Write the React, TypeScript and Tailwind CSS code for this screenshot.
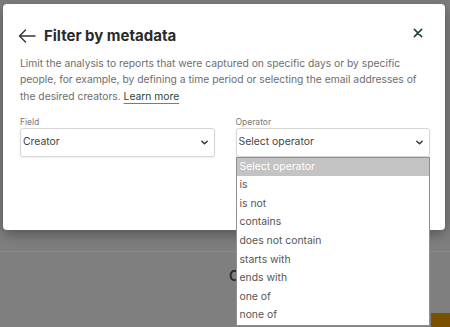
import { FC } from "react"

const operators = ["Select operator", "is", "is not", "contains", "does not contain", "starts with", "ends with", "one of", "none of"]

const Chevron: FC = () => (
    <svg width="9" height="9" viewBox="0 0 10 10" className="text-[#333]">
        <path d="M2 3.5 L5 6.5 L8 3.5" fill="none" stroke="currentColor" strokeWidth="1.6" strokeLinecap="round" strokeLinejoin="round" />
    </svg>
)

const Select: FC<{ value: string }> = ({ value }) => (
    <div className="h-[29px] flex items-center justify-between pl-[2px] pr-[5px] border border-[#d6d6d6] rounded-[3px] bg-white shadow-[0_1px_2px_rgba(0,0,0,0.08)] text-[10.4px] text-[#444]">
        <span>{value}</span>
        <Chevron />
    </div>
)

export default function App() {
    return <div className="relative w-[450px] h-[327px] overflow-hidden bg-[#7f7f7f] font-['Inter',sans-serif]">
        {/* page behind the backdrop */}
        <div className="absolute left-0 top-[251px] w-full h-px bg-[#8b8b8b]" />
        <div className="absolute left-[229px] top-[265px] text-[14px] font-semibold text-[#1c2e22]">C</div>
        <div className="absolute left-[431px] top-[313px] w-[19px] h-[14px] bg-[#7a5100]" />

        {/* modal */}
        <div className="absolute left-[3px] top-[4px] w-[442px] h-[226px] bg-white rounded-[4px] shadow-[0_4px_14px_rgba(0,0,0,0.35)] pl-[17px] pr-[15px]">
            <div className="flex items-center justify-between pt-[21px] pr-[7px] -ml-[2px]">
                <div className="flex items-center gap-[8px]">
                    <svg width="18" height="14" viewBox="0 0 18 14" className="text-[#333]">
                        <path d="M17 7 H1.5 M7.5 1 L1.5 7 L7.5 13" fill="none" stroke="currentColor" strokeWidth="1.4" strokeLinecap="round" strokeLinejoin="round" />
                    </svg>
                    <h2 className="text-[15px] font-bold text-[#2b2b2b]">Filter by metadata</h2>
                </div>
                <svg width="10" height="10" viewBox="0 0 11 11" className="text-[#1f4a38] mb-[6px]">
                    <path d="M1.5 1.5 L9.5 9.5 M9.5 1.5 L1.5 9.5" fill="none" stroke="currentColor" strokeWidth="1.8" strokeLinecap="round" />
                </svg>
            </div>
            <p className="mt-[7px] text-[10.3px] leading-[16.7px] text-[#6e6e6e] pr-[6px]">
                Limit the analysis to reports that were captured on specific days or by specific people, for example, by defining a time period or selecting the email addresses of the desired creators. <span className="text-[#1f4a38] underline underline-offset-[3px] decoration-[#5f8a76]">Learn more</span>
            </p>
            <div className="grid grid-cols-2 gap-[21px] mt-[12px]">
                <div>
                    <div className="text-[8.5px] leading-[10px] text-[#777] mb-[1px]">Field</div>
                    <Select value="Creator" />
                </div>
                <div className="relative">
                    <div className="text-[8.5px] leading-[10px] text-[#777] mb-[1px]">Operator</div>
                    <Select value="Select operator" />
                    <ul className="absolute left-0 top-[40px] w-full bg-white border border-[#8f8f8f] text-[10.4px] text-[#555] z-10">
                        {operators.map((op, i) => (
                            <li key={op} className={`h-[18.6px] leading-[18.6px] pl-[3px] ${i === 0 ? "bg-[#c3c3c3] text-white" : ""}`}>{op}</li>
                        ))}
                    </ul>
                </div>
            </div>
        </div>
    </div>
}
